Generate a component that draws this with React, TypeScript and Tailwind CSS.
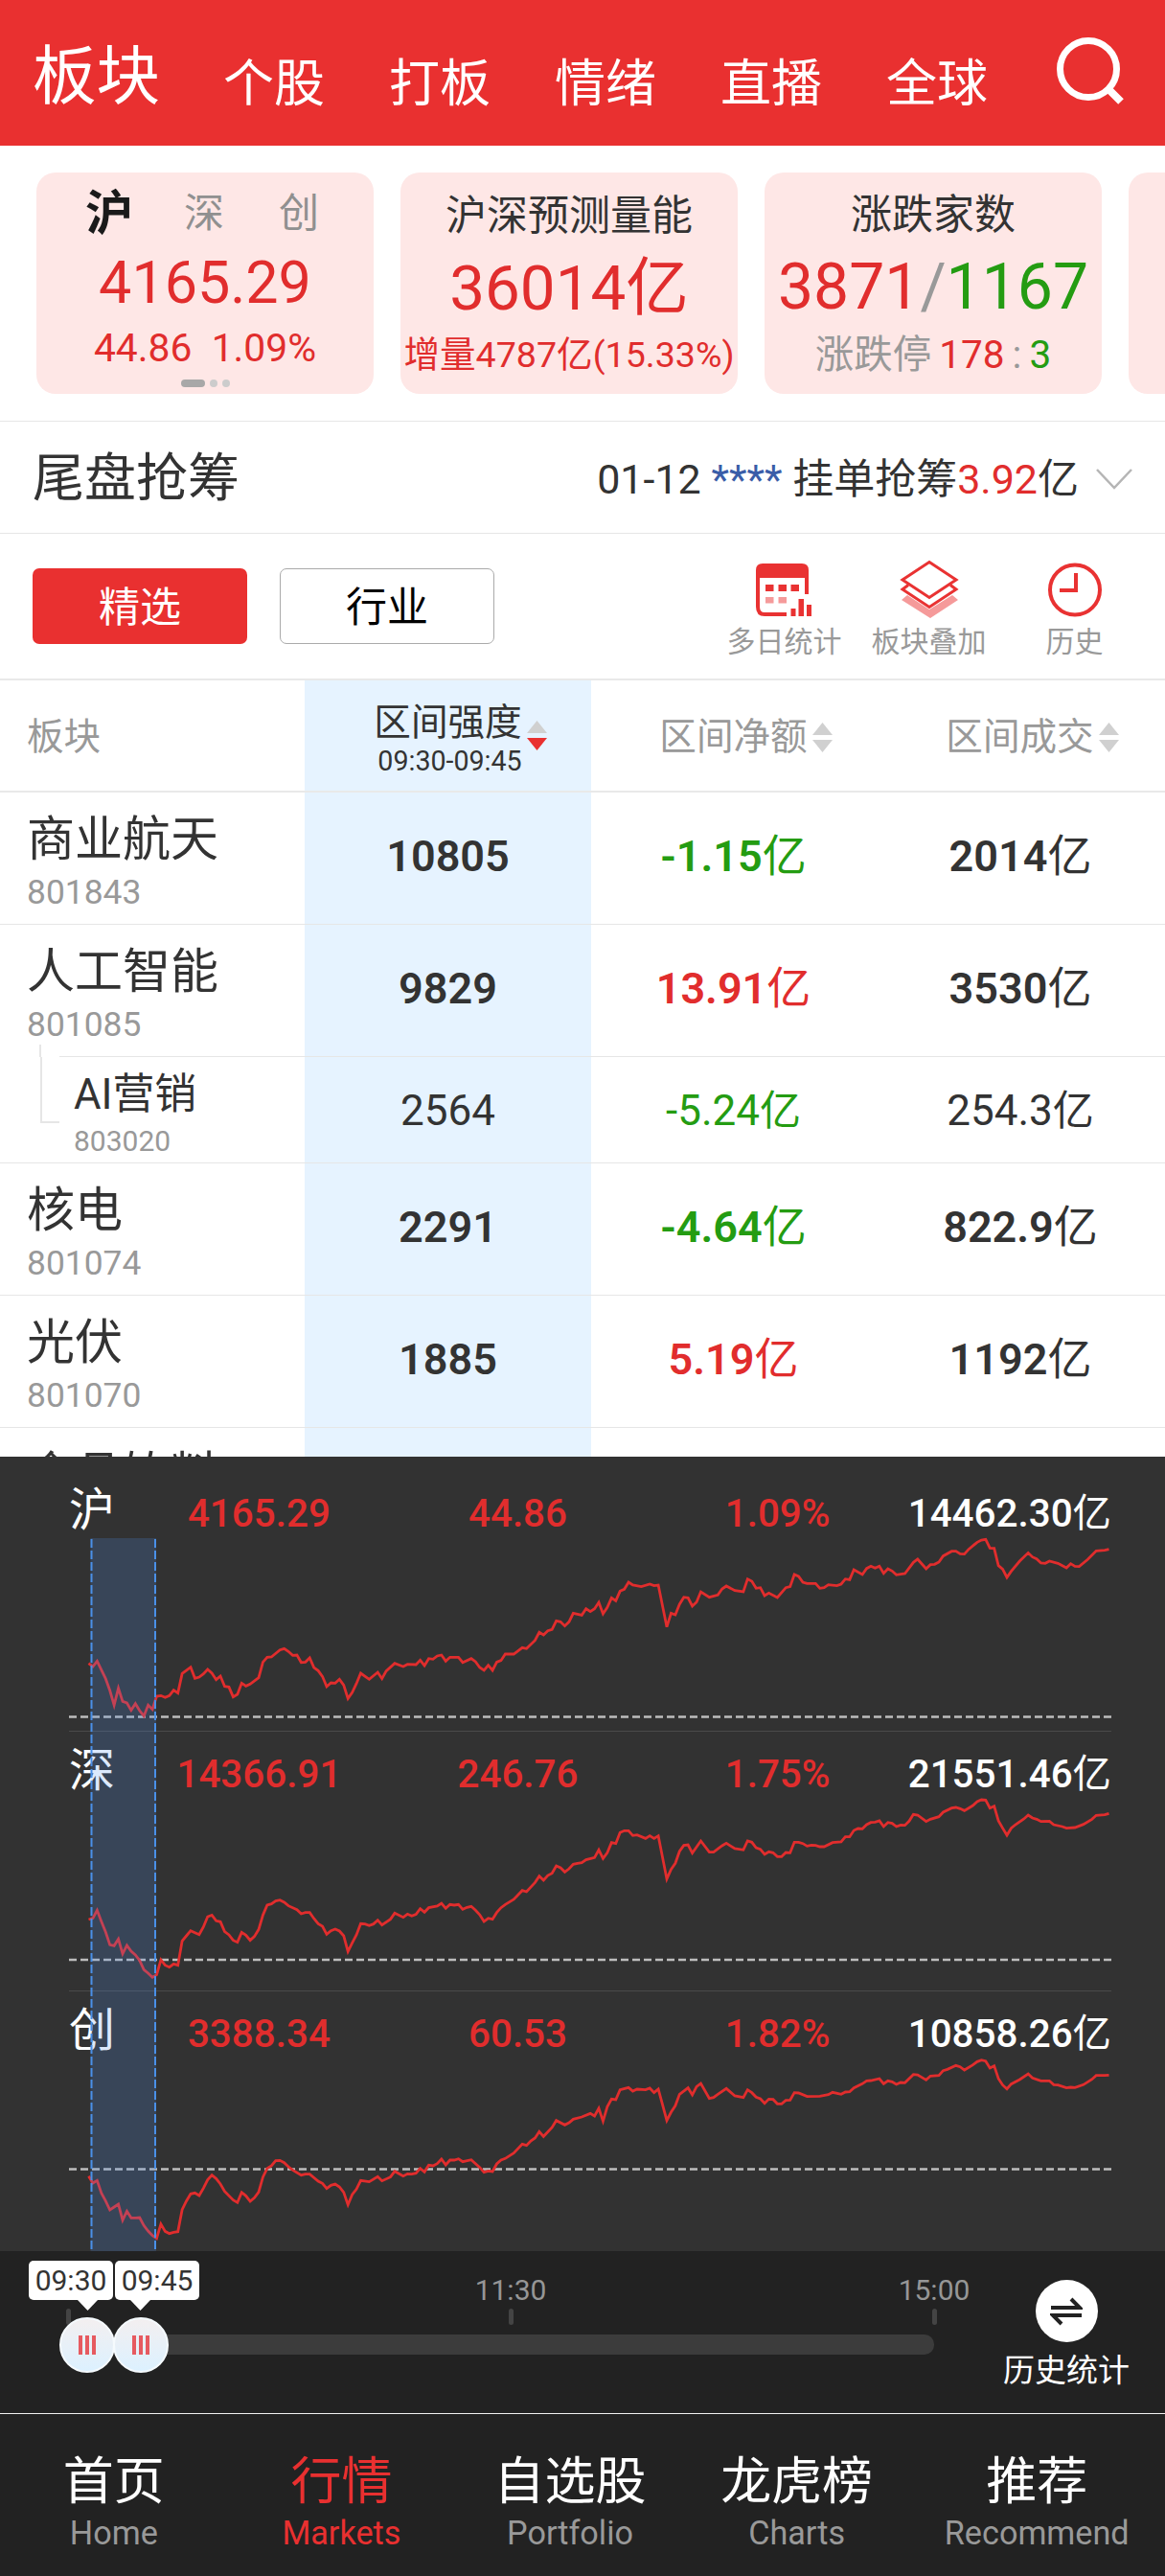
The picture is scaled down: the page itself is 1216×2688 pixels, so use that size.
import clsx from "clsx";

type Quote = {
  label: string;
  price: string;
  change: string;
  percent: string;
  amount: string;
};

type Sector = {
  name: string;
  code: string;
  strength: string;
  net: string;
  turnover: string;
  up: boolean;
  child?: boolean;
};

const topTabs = ["个股", "打板", "情绪", "直播", "全球"];

const sectors: Sector[] = [
  { name: "商业航天", code: "801843", strength: "10805", net: "-1.15", turnover: "2014", up: false },
  { name: "人工智能", code: "801085", strength: "9829", net: "13.91", turnover: "3530", up: true },
  { name: "AI营销", code: "803020", strength: "2564", net: "-5.24", turnover: "254.3", up: false, child: true },
  { name: "核电", code: "801074", strength: "2291", net: "-4.64", turnover: "822.9", up: false },
  { name: "光伏", code: "801070", strength: "1885", net: "5.19", turnover: "1192", up: true },
];

const quotes: Quote[] = [
  { label: "沪", price: "4165.29", change: "44.86", percent: "1.09%", amount: "14462.30" },
  { label: "深", price: "14366.91", change: "246.76", percent: "1.75%", amount: "21551.46" },
  { label: "创", price: "3388.34", change: "60.53", percent: "1.82%", amount: "10858.26" },
];

// "minute,value" pairs, one trading day is 240 minutes
const lines = [
  {
    top: 20,
    base: 271.5,
    points:
      "0,587 1,597 2,580 4,635 5,672 6,718 7,665 8,706 9,711 10,734 11,713 12,735 13,752 14,718 15,731 16,690 17,688 18,694 19,688 20,671 21,680 22,619 24,599 25,634 26,630 27,620 28,606 29,618 30,638 31,627 32,659 33,661 34,692 35,684 36,649 37,658 38,652 40,632 41,583 42,568 43,567 45,545 46,541 47,550 48,562 49,561 50,584 51,583 52,570 53,600 54,610 55,628 56,660 57,648 58,649 59,637 60,655 61,697 62,678 63,650 64,618 66,637 68,615 69,635 70,611 72,587 74,597 75,590 77,591 78,577 79,594 80,572 81,574 82,564 83,561 84,580 85,568 87,568 88,584 90,572 91,582 92,600 93,609 94,593 95,609 96,583 97,578 98,558 100,558 102,538 103,541 105,515 106,490 107,498 108,485 109,481 110,454 111,457 112,470 113,457 114,430 116,436 117,416 118,425 119,416 120,396 121,432 122,412 123,382 124,391 125,361 126,355 127,333 128,342 130,347 132,339 133,344 134,342 136,473 137,430 138,435 139,402 140,380 141,382 142,408 143,395 144,363 146,380 148,373 149,354 150,345 152,359 154,363 155,323 156,330 157,352 158,350 159,375 160,367 162,381 164,350 165,347 166,309 167,315 168,333 169,337 171,337 172,352 173,350 174,341 176,344 177,339 178,323 179,325 180,294 182,309 183,290 184,283 185,289 186,283 187,305 188,291 189,298 190,310 192,306 194,271 195,261 197,291 198,278 199,277 200,270 201,251 203,236 204,236 205,244 206,245 207,230 209,208 210,201 211,199 212,226 213,227 214,281 215,292 216,318 217,299 219,267 221,241 222,254 223,260 224,273 225,274 226,267 228,274 230,288 231,275 232,283 233,284 235,262 237,235 239,233 240,230",
  },
  {
    top: 280,
    base: 525,
    points:
      "0,609 1,605 2,580 3,615 4,648 5,688 6,691 7,670 8,716 9,690 10,708 11,720 12,737 13,766 14,777 15,790 16,782 17,735 18,752 19,758 20,748 21,752 22,676 23,660 24,644 26,656 27,632 28,600 29,595 30,613 31,616 32,647 33,657 34,674 35,680 36,649 37,658 38,674 39,662 40,640 41,595 42,564 43,560 44,551 45,548 46,555 47,566 49,578 50,591 51,587 52,587 53,606 54,622 55,630 56,655 57,644 58,639 59,645 60,660 61,709 62,682 63,657 64,622 65,623 66,628 67,623 68,611 69,626 71,608 72,589 74,602 75,592 76,598 77,593 78,575 79,586 80,572 82,567 83,558 84,574 85,562 86,564 87,562 88,577 89,571 90,568 91,580 92,594 93,615 94,605 95,608 96,587 97,572 98,562 100,546 102,518 103,522 105,493 106,473 107,486 108,471 109,464 110,441 111,447 112,460 113,450 114,436 115,433 116,431 117,422 119,415 120,391 121,418 122,400 123,368 124,371 125,337 126,331 127,331 128,346 129,344 131,355 132,347 133,355 134,347 136,482 137,452 138,433 139,395 140,377 141,375 142,401 144,363 146,398 147,398 149,378 150,370 152,387 154,391 155,363 156,367 157,384 158,389 159,405 160,397 161,400 162,412 163,412 164,399 165,400 166,367 167,367 168,371 169,379 170,376 171,377 172,381 173,381 175,368 177,366 178,350 179,350 180,330 181,324 182,325 183,312 184,305 185,304 186,300 187,318 188,305 189,308 190,318 191,313 192,314 193,301 194,280 195,282 197,302 198,295 200,287 201,273 203,260 204,258 205,262 206,268 208,252 209,240 210,234 211,235 212,260 213,254 214,300 215,323 216,345 217,323 218,312 220,294 221,282 222,291 223,295 224,302 226,301 227,312 229,318 230,323 232,321 234,311 236,295 237,283 239,281 240,277",
  },
  {
    top: 560,
    base: 743.5,
    points:
      "0,572 1,594 2,586 3,625 4,650 5,678 6,669 7,660 8,710 9,682 10,703 11,703 12,702 13,727 14,744 15,758 16,767 17,722 18,745 19,752 20,748 21,746 22,677 23,650 24,628 25,625 26,633 27,610 28,584 29,569 30,580 31,597 32,620 34,647 35,655 36,623 37,634 38,651 39,640 40,622 41,575 42,548 43,540 44,524 45,523 46,530 47,543 48,553 50,569 51,566 52,566 54,588 55,595 56,611 57,601 58,597 59,606 60,623 61,662 62,630 63,613 64,586 66,590 68,574 69,587 71,575 72,557 74,572 75,565 76,566 77,563 78,548 79,559 80,538 81,540 82,533 83,519 84,537 85,522 86,522 87,518 88,527 90,521 92,545 93,560 94,556 95,558 96,534 97,522 98,517 100,500 102,472 103,476 104,462 105,453 106,433 107,448 109,420 110,398 112,412 113,405 114,394 116,387 118,376 119,384 120,360 121,400 122,355 123,331 124,333 125,302 127,295 128,306 129,300 131,302 132,297 133,311 134,300 136,398 137,372 138,352 139,316 141,296 142,318 143,292 144,282 146,329 147,326 148,316 150,298 152,321 154,326 155,302 156,311 157,325 158,330 159,344 160,331 161,332 162,346 163,346 164,335 165,334 166,311 167,312 169,323 172,322 174,317 175,310 177,316 178,309 179,308 180,296 182,283 183,274 184,273 186,267 187,283 188,274 189,277 190,285 191,279 192,280 194,254 195,255 197,271 198,259 200,257 201,242 202,238 204,226 205,230 206,240 208,224 209,214 210,209 211,212 212,234 213,227 214,267 215,287 216,299 217,284 219,270 221,252 222,265 224,274 226,274 227,286 228,287 230,296 231,294 232,295 234,286 236,269 237,257 239,257 240,256",
  },
];

const navItems = [
  { title: "首页", sub: "Home", width: "w-[238px]" },
  { title: "行情", sub: "Markets", width: "w-[238px]", active: true },
  { title: "自选股", sub: "Portfolio", width: "w-[240px]" },
  { title: "龙虎榜", sub: "Charts", width: "w-[234px]" },
  { title: "推荐", sub: "Recommend", width: "w-[268px]" },
];

function Header() {
  return (
    <header className="flex h-[152px] items-center bg-[#e93030] pt-1 pl-[34px] text-white">
      <div className="w-[199px] pt-1 text-[66.5px] leading-[66px]">板块</div>
      {topTabs.map((tab) => (
        <div key={tab} className="w-[173px] pt-[20px] text-[53px] leading-[53px]">
          {tab}
        </div>
      ))}
      <svg
        className="-mt-1 ml-[3px] h-[80px] w-[80px]"
        viewBox="0 0 80 80"
        fill="none"
        stroke="white"
        strokeWidth="7"
      >
        <circle cx="35" cy="36" r="29.5" />
        <path d="M56 57 L69 70" strokeWidth="8" />
      </svg>
    </header>
  );
}

function SummaryCards() {
  return (
    <section className="flex h-[287px] gap-7 overflow-hidden pt-7 pl-[38px]">
      <div className="flex h-[231px] w-[352px] shrink-0 flex-col items-center rounded-[20px] bg-[#fee7e6] text-[#e12d2d]">
        <div className="mt-[17px] flex h-[52px] items-center pr-0.5 text-[42px] leading-[52px] text-[#909090]">
          <span className="w-[99px] text-center text-[50px] font-bold text-[#1a1a1a]">沪</span>
          <span className="w-[99px] text-center">深</span>
          <span className="w-[99px] text-center">创</span>
        </div>
        <div className="mt-[13px] text-[61px] leading-[66px]">4165.29</div>
        <div className="mt-[13px] text-[40.8px] leading-[44px] whitespace-pre">44.86  1.09%</div>
        <div className="mt-[11px] flex gap-[5px]">
          <i className="h-2 w-[25px] rounded-full bg-[#a8a8a8]" />
          <i className="h-2 w-2 rounded-full bg-[#cccccc]" />
          <i className="h-2 w-2 rounded-full bg-[#cccccc]" />
        </div>
      </div>

      <div className="flex h-[231px] w-[352px] shrink-0 flex-col items-center rounded-[20px] bg-[#fee7e6] text-[#e12d2d]">
        <div className="mt-[19px] text-[43px] leading-[52px] text-[#333]">沪深预测量能</div>
        <div className="mt-[17px] text-[65.5px] leading-[66px]">36014亿</div>
        <div className="mt-[14px] text-[37.6px] leading-[44px] whitespace-nowrap">增量4787亿(15.33%)</div>
      </div>

      <div className="flex h-[231px] w-[352px] shrink-0 flex-col items-center rounded-[20px] bg-[#fee7e6] text-[#e12d2d]">
        <div className="mt-[18px] text-[43px] leading-[52px] text-[#333]">涨跌家数</div>
        <div className="mt-[17px] text-[66px] leading-[66px]">
          3871<span className="text-[#999]">/</span>
          <span className="text-[#249c12]">1167</span>
        </div>
        <div className="mt-[15px] flex text-[40.5px] leading-[44px]">
          <span className="mr-2 text-[#999]">涨跌停</span>
          178
          <span className="mx-[8px] text-[#999]">:</span>
          <span className="text-[#249c12]">3</span>
        </div>
      </div>

      <div className="h-[231px] w-[352px] shrink-0 rounded-[20px] bg-[#fee7e6]" />
    </section>
  );
}

function AuctionBar() {
  return (
    <section className="flex h-[117px] items-center justify-between border-t border-[#e6e6e6] pt-[3px] pr-[34px] pl-[34px] text-[#333]">
      <h2 className="text-[54px] leading-[60px]">尾盘抢筹</h2>
      <div className="flex items-center text-[43px] leading-[50px]">
        <div className="whitespace-pre">
          01-12 <span className="text-[#3a5da8]">****</span> 挂单抢筹
          <span className="text-[#e12d2d]">3.92</span>亿
        </div>
        <svg className="ml-[18px] h-6 w-[38px]" viewBox="0 0 38 24" fill="none" stroke="#b5b5b5" strokeWidth="2.5">
          <path d="M1 2 L19 21 L37 2" />
        </svg>
      </div>
    </section>
  );
}

function CalendarIcon() {
  return (
    <svg className="h-[62px] w-[62px]" viewBox="0 0 62 62">
      <path d="M3 15 V49 Q3 57 10 57 H33" fill="none" stroke="#e93232" strokeWidth="4" />
      <path d="M54 12 V36" stroke="#e93232" strokeWidth="4" />
      <path d="M1 19 V11 Q1 4 8 4 H49 Q56 4 56 11 V19 Z" fill="#e93232" />
      <path d="M11 26h8.500v7h-8.500z M24.5 26h8.500v7h-8.500z M37.500 26h8.500v7h-8.500z" fill="#e93232" />
      <path d="M11 39h8.500v6.5h-8.500z M24.5 39h8.500v6.5h-8.500z" fill="#f59a9a" />
      <path d="M37.500 51h5v8h-5z M45.500 41h5.5v18h-5.5z M54 47h5v12h-5z" fill="#e93232" />
    </svg>
  );
}

function LayersIcon() {
  return (
    <svg className="h-[62px] w-[62px]" viewBox="0 0 62 62">
      <path d="M2 42 L8 37 L31 52 L55 37 L61 42 L32 61 Z" fill="#f59a9a" />
      <path d="M9 26.5 L3 31 L31 49.5 L59 31 L53 26.5" fill="white" stroke="#e93232" strokeWidth="3" />
      <path d="M31 2.5 L59 21 L31 39.5 L3 21 Z" fill="white" stroke="#e93232" strokeWidth="3" />
    </svg>
  );
}

function ClockIcon() {
  return (
    <svg className="h-[62px] w-[62px]" viewBox="0 0 62 62" fill="none" stroke="#e93232" strokeWidth="4">
      <circle cx="31" cy="31.5" r="26" />
      <path d="M32 14 V32 H15" />
    </svg>
  );
}

function Toolbar() {
  return (
    <section className="flex h-[152px] items-center border-t border-[#e6e6e6] pl-[34px]">
      <button className="h-[79px] w-[224px] rounded-[7px] bg-[#e93030] pt-0.5 text-[43px] leading-[50px] text-white">
        精选
      </button>
      <button className="ml-[34px] h-[79px] w-[224px] rounded-[7px] border-[1.5px] border-[#aaa] pt-0.5 text-[43px] leading-[50px] text-black">
        行业
      </button>
      <div className="ml-[227px] flex pt-[7px] text-[30px] leading-[36px] text-[#999]">
        <div className="flex w-[151px] flex-col items-center gap-1.5">
          <CalendarIcon />
          多日统计
        </div>
        <div className="flex w-[151px] flex-col items-center gap-1.5">
          <LayersIcon />
          板块叠加
        </div>
        <div className="flex w-[153px] flex-col items-center gap-1.5">
          <ClockIcon />
          历史
        </div>
      </div>
    </section>
  );
}

function SortArrows({ active = false }: { active?: boolean }) {
  return (
    <svg className="h-[31px] w-[21px]" viewBox="0 0 21 31">
      <path d="M10.5 0 L21 13 H0 Z" fill="#d0d0d0" />
      <path d="M0 18 H21 L10.5 31 Z" fill={active ? "#e93030" : "#d0d0d0"} />
    </svg>
  );
}

function Unit({ bold = true }: { bold?: boolean }) {
  return <span className={clsx("font-normal", bold ? "text-[46px]" : "text-[43px]")}>亿</span>;
}

function SectorRow({ row, nextIsChild }: { row: Sector; nextIsChild: boolean }) {
  const { name, code, strength, net, turnover, up, child } = row;
  return (
    <div
      className={clsx(
        "flex text-[#333]",
        child ? "h-[111px] text-[44px] *:pt-[6px]" : "h-[138px] text-[45px] font-semibold",
      )}
    >
      <div className={clsx("flex w-[318px] font-normal", child && "border-b border-[#e6e6e6]")}>
        {child && (
          <div className="-mt-[6px] flex w-[62px] justify-end">
            <i className="h-[69px] w-[20px] border-b-2 border-l-2 border-[#e6e6e6]" />
          </div>
        )}
        <div
          className={clsx(
            "flex-1",
            !nextIsChild && !child && "border-b border-[#e6e6e6]",
            child ? "pt-[7px] pl-[15px]" : "pt-[19px] pl-[28px]",
          )}
        >
          <div className={child ? "text-[43.8px] leading-[52px]" : "text-[50px] leading-[60px]"}>{name}</div>
          <div
            className={clsx(
              "text-[#999]",
              child ? "text-[30px] leading-[46px]" : "text-[35.4px] leading-[50px]",
            )}
          >
            {code}
          </div>
          {/* start of the branch line that leads to the child row */}
          {nextIsChild && (
            <div className="-ml-[28px] flex h-[9px]">
              <i className="mt-[-4px] ml-[41px] h-[13px] w-0.5 bg-[#e6e6e6]" />
              <i className="ml-[19px] flex-1 border-b border-[#e6e6e6]" />
            </div>
          )}
        </div>
      </div>
      <div className="flex w-[299px] items-center justify-center border-b border-[#e6e6e6] bg-[#e6f3ff] pb-1">
        {strength}
      </div>
      <div
        className={clsx(
          "flex w-[299px] items-center justify-center border-b border-[#e6e6e6] pr-0.5 pb-1",
          up ? "text-[#e12d2d]" : "text-[#249c12]",
        )}
      >
        {net}
        <Unit bold={!child} />
      </div>
      <div className="flex w-[300px] items-center justify-center border-b border-[#e6e6e6] pr-0.5 pb-1">
        {turnover}
        <Unit bold={!child} />
      </div>
    </div>
  );
}

function SectorTable() {
  return (
    <section className="h-[812px] overflow-hidden border-t-2 border-[#e9e9e9]">
      <div className="flex h-[117px] text-[38.6px] leading-[44px] text-[#999]">
        <div className="flex w-[318px] items-center border-b-2 border-[#e9e9e9] pt-[3px] pl-[28px]">板块</div>
        <div className="flex w-[299px] items-center justify-center gap-[5px] border-b-2 border-[#e9e9e9] bg-[#e6f3ff] pl-[26px] text-[#333]">
          <div className="pt-2.5 text-center">
            <div>区间强度</div>
            <div className="pl-1 text-[28.6px] leading-[37px]">09:30-09:45</div>
          </div>
          <SortArrows active />
        </div>
        <div className="flex w-[299px] items-center justify-center gap-[5px] border-b-2 border-[#e9e9e9] pt-[3px] pl-[24px]">
          区间净额
          <SortArrows />
        </div>
        <div className="flex w-[300px] items-center justify-center gap-[5px] border-b-2 border-[#e9e9e9] pt-[3px] pl-[23px]">
          区间成交
          <SortArrows />
        </div>
      </div>
      {sectors.map((row, i) => (
        <SectorRow key={row.code} row={row} nextIsChild={!!sectors[i + 1]?.child} />
      ))}
      <div className="flex h-[138px]">
        <div className="w-[318px] pt-[19px] pl-[28px] text-[50px] leading-[60px] text-[#333]">食品饮料</div>
        <div className="w-[299px] bg-[#e6f3ff]" />
      </div>
    </section>
  );
}

function IndexCharts() {
  return (
    <section className="relative h-[829px] bg-[#323232] pt-[14px] pr-[56px] pl-[72px]">
      {quotes.map((q, i) => (
        <div key={q.label} className={clsx("h-[271.5px]", i > 0 && "border-t border-[#4a4a4a]")}>
          <div
            className={clsx(
              "flex items-center text-[40.4px] leading-[48px] font-medium text-[#e12d2d]",
              i > 0 ? "pt-[17px]" : "pt-[18px]",
            )}
          >
            <span className="w-[64px] pb-[6px] text-[48px] font-normal text-white">{q.label}</span>
            <span className="w-[273px] pt-0.5 text-center">{q.price}</span>
            <span className="w-[273px] pt-0.5 text-center">{q.change}</span>
            <span className="w-[275px] pt-0.5 text-center">{q.percent}</span>
            <span className="flex flex-1 justify-end pt-0.5 whitespace-nowrap text-white">
              {q.amount}
              <span className="font-normal">亿</span>
            </span>
          </div>
        </div>
      ))}
      <svg className="absolute inset-0 h-[829px] w-[1216px]" viewBox="0 0 1216 829" fill="none">
        {lines.map((line) => (
          <g key={line.top}>
            <path d={`M72 ${line.base} H1160`} stroke="#bdbdbd" strokeWidth="2.4" strokeDasharray="8 4" />
            <g transform={`translate(92.5 ${line.top}) scale(4.4375 0.33333)`}>
              <polyline points={line.points} stroke="#e12d2d" strokeWidth="2.8" vectorEffect="non-scaling-stroke" />
            </g>
          </g>
        ))}
        <rect x="94.5" y="85" width="68.5" height="744" fill="#4f91f0" fillOpacity="0.2" />
        <path d="M95.5 86 V829 M162 86 V829" stroke="#4a90e8" strokeWidth="2" strokeDasharray="9 3" />
      </svg>
    </section>
  );
}

function Bubble({ time, pointer }: { time: string; pointer: string }) {
  return (
    <div className="w-[88px]">
      <div className="h-[41px] rounded-[5px] bg-white text-center text-[30px] leading-[42px] text-[#333]">
        {time}
      </div>
      <svg className={clsx("h-[11px] w-[21px]", pointer)} viewBox="0 0 21 11">
        <path d="M0 0 H21 L10.5 11 Z" fill="white" />
      </svg>
    </div>
  );
}

function Knob() {
  return (
    <div className="flex h-[58px] w-[58px] items-center justify-center gap-[3px] rounded-full border-2 border-[#f5fafd] bg-linear-to-b from-[#f3eff0] to-[#dcf1ff]">
      <i className="h-5 w-1 bg-[#e65a60]" />
      <i className="h-5 w-1 bg-[#e65a60]" />
      <i className="h-5 w-1 bg-[#e65a60]" />
    </div>
  );
}

function Tick() {
  return <i className="h-[17px] w-[5px] rounded-full bg-[#444]" />;
}

function TimeSlider() {
  return (
    <section className="flex h-[169px] bg-[#222]">
      <div className="relative w-[1012px] shrink-0 pt-[22px]">
        <div className="flex items-end pl-[69px] text-[30px] leading-[38px] text-[#969696]">
          <Tick />
          <div className="ml-[422px] flex w-[74px] flex-col items-center">
            11:30
            <Tick />
          </div>
          <div className="ml-[368px] flex w-[74px] flex-col items-center">
            15:00
            <Tick />
          </div>
        </div>
        <div className="mt-2.5 ml-[72px] h-[21px] w-[903px] rounded-[10px] bg-[#3c3c3c]" />
        {/* range handles and their time bubbles */}
        <div className="absolute top-[10px] left-[30px] flex gap-0.5">
          <Bubble time="09:30" pointer="ml-[51px]" />
          <Bubble time="09:45" pointer="ml-[16px]" />
        </div>
        <div className="absolute top-[69px] left-[62px] flex -space-x-0.5">
          <Knob />
          <Knob />
        </div>
      </div>
      <div className="flex flex-1 flex-col items-center pt-[30px] pr-0.5 text-[33px] leading-[40px] text-white">
        <div className="flex h-[65px] w-[65px] items-center justify-center rounded-full bg-white">
          <svg className="h-[30px] w-[34px]" viewBox="0 0 34 30" fill="none" stroke="#222" strokeWidth="4">
            <path d="M1 11 H31 L22 2" />
            <path d="M33 19 H3 L12 28" />
          </svg>
        </div>
        <div className="mt-[10px]">历史统计</div>
      </div>
    </section>
  );
}

function BottomNav() {
  return (
    <nav className="flex h-[170px] border-t border-[#f0f0f0] bg-[#222]">
      {navItems.map((item) => (
        <div
          key={item.sub}
          className={clsx(
            "flex flex-col items-center pt-[41px]",
            item.width,
            item.active ? "text-[#e93030]" : "text-white",
          )}
        >
          <div className="text-[53px] leading-[60px]">{item.title}</div>
          <div className={clsx("mt-0.5 text-[34.2px] leading-[42px]", !item.active && "text-[#999]")}>
            {item.sub}
          </div>
        </div>
      ))}
    </nav>
  );
}

function App() {
  return (
    <div className="h-[2688px] w-[1216px] overflow-hidden bg-white font-['Roboto','Noto_Sans_CJK_SC',sans-serif]">
      <Header />
      <SummaryCards />
      <AuctionBar />
      <Toolbar />
      <SectorTable />
      <IndexCharts />
      <TimeSlider />
      <BottomNav />
    </div>
  );
}

export default App;
